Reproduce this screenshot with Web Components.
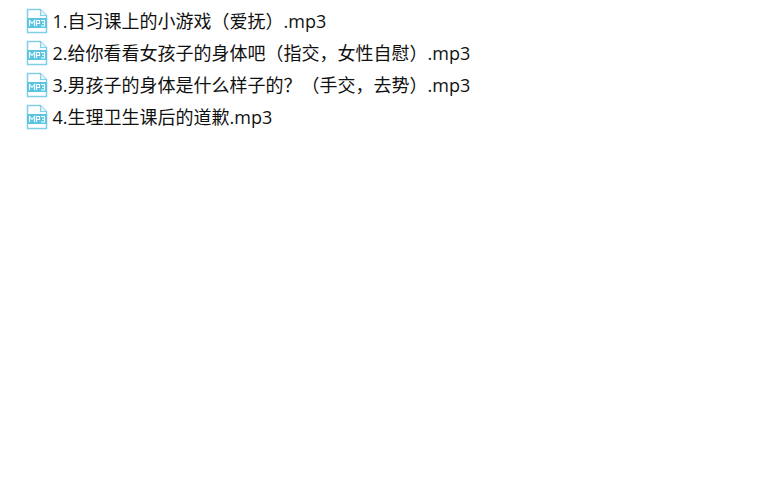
<!DOCTYPE html>
<html>
<head>
<meta charset="utf-8">
<title>mp3 list</title>
<style>
    html, body { margin: 0; background: #fff; }
    body { font-family: "Open Sans", "Noto Sans CJK SC", sans-serif; color: #111; }
</style>
</head>
<body>
<file-list>
    <file-row>1.自习课上的小游戏（爱抚）.mp3</file-row>
    <file-row>2.给你看看女孩子的身体吧（指交，女性自慰）.mp3</file-row>
    <file-row>3.男孩子的身体是什么样子的？（手交，去势）.mp3</file-row>
    <file-row>4.生理卫生课后的道歉.mp3</file-row>
</file-list>
<script>
class FileList extends HTMLElement {
    connectedCallback() {
        this.attachShadow({ mode: 'open' });
        this.shadowRoot.innerHTML = `
            <style>
                :host {
                    display: flex;
                    flex-direction: column;
                    gap: 4px;
                    padding: 7px 0 0 25px;
                }
            </style>
            <slot></slot>
        `;
    }
}

class FileRow extends HTMLElement {
    connectedCallback() {
        this.attachShadow({ mode: 'open' });
        this.shadowRoot.innerHTML = `
            <style>
                :host {
                    display: flex;
                    align-items: center;
                    gap: 4.5px;
                    height: 28px;
                    font-size: 18px;
                    line-height: 28px;
                    white-space: nowrap;
                }
                svg { flex: none; display: block; }
            </style>
            <svg width="23" height="26" viewBox="0 0 23 26">
                <path d="M2.5 1.5H15.5L21.5 7.5V24.5H2.5Z" fill="#fff" stroke="#7fd0e6" stroke-width="1.5"/>
                <path d="M15.5 1.5V7.5H21.5" fill="#e4f5fa" stroke="#7fd0e6" stroke-width="1.2"/>
                <rect x="2" y="10" width="20" height="10" fill="#5cc4e0"/>
                <path d="M4.5 18V12.5L7 15.5L9.5 12.5V18M11.5 18V12.5H14.5V15.5H11.5M16 12.5H19.5V18H16M17 15.2H19.5" fill="none" stroke="#fff" stroke-width="1.1"/>
            </svg>
            <slot></slot>
        `;
    }
}

customElements.define('file-list', FileList);
customElements.define('file-row', FileRow);
</script>
</body>
</html>
